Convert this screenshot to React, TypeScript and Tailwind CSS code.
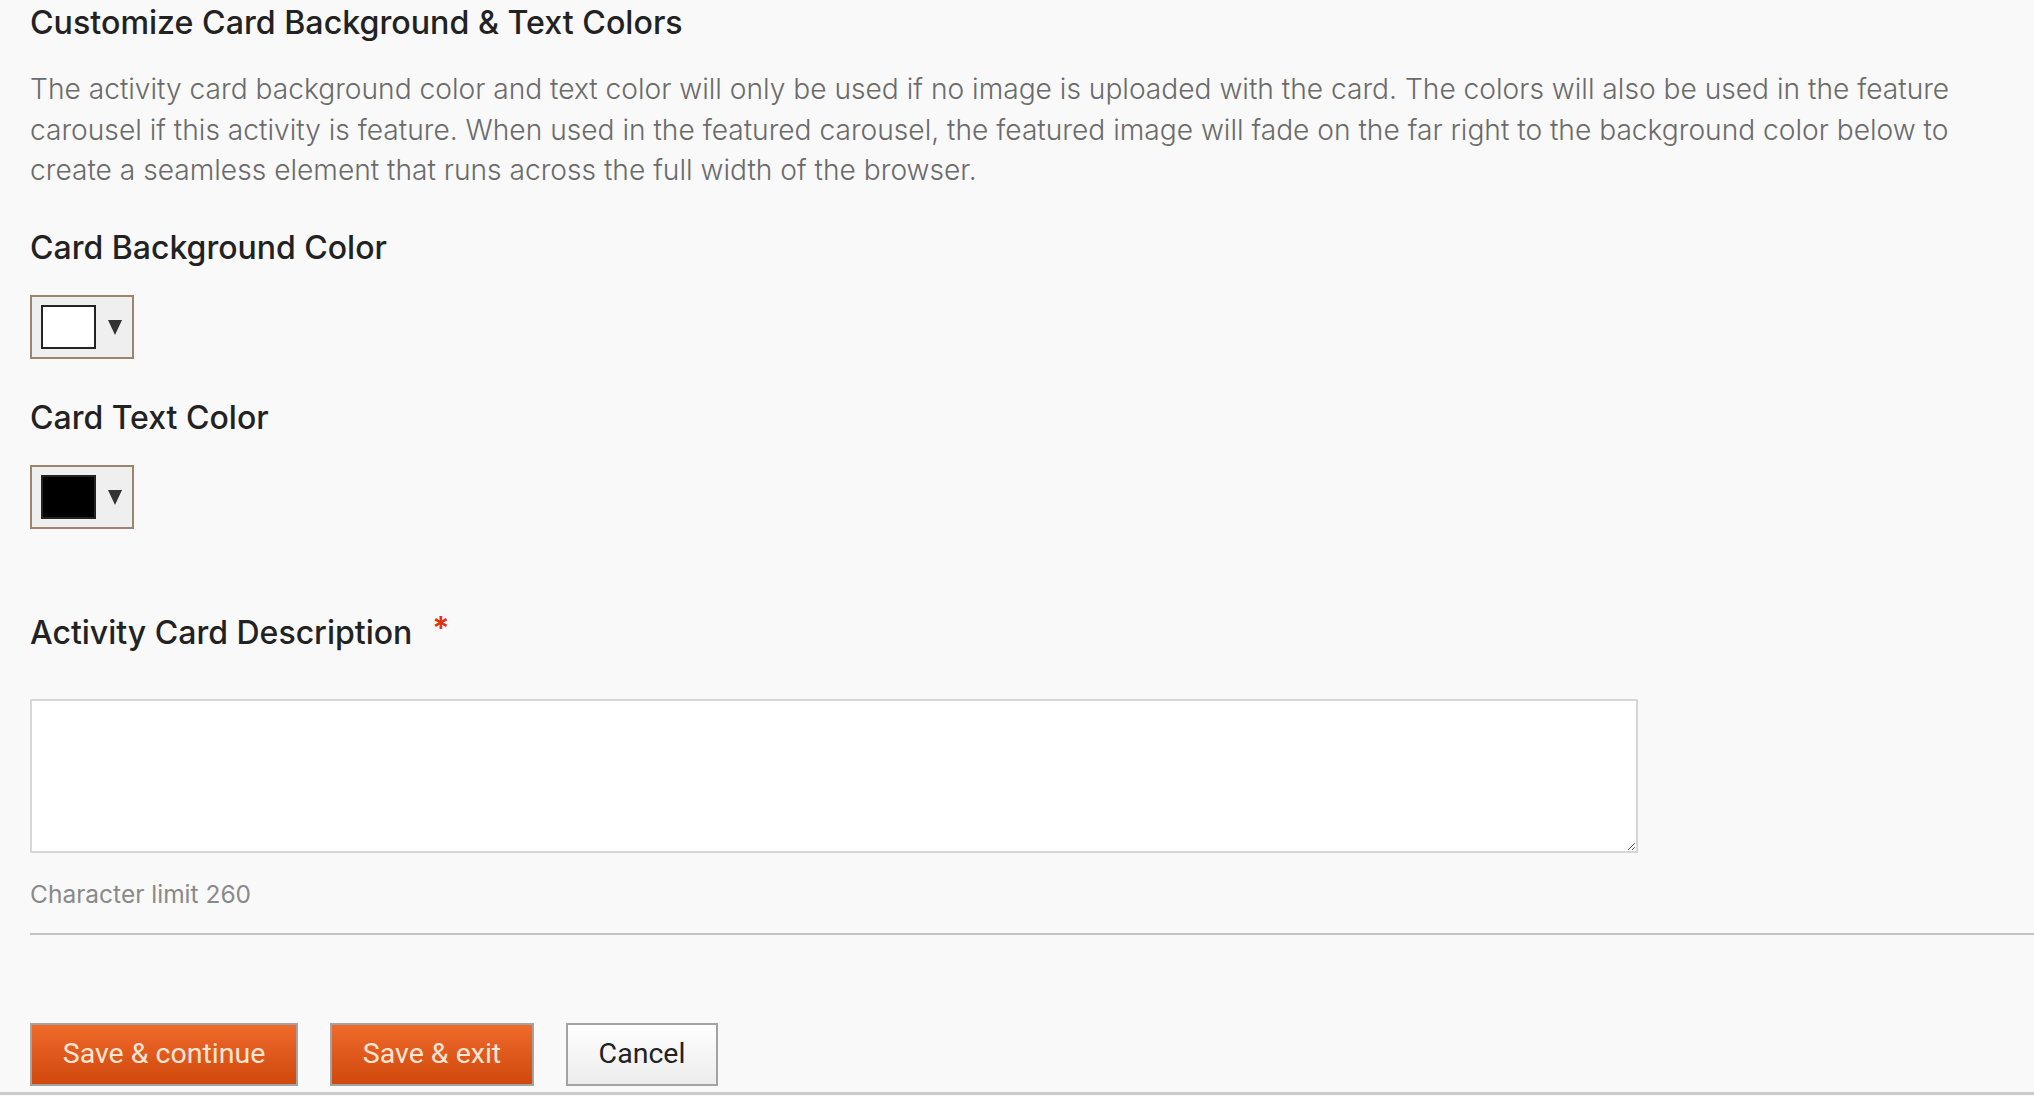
import { useState } from "react";

const font = { fontFamily: "Inter, 'Noto Sans', sans-serif" };

export default function App() {
  const [bg] = useState("#ffffff");
  const [fg] = useState("#000000");

  return (
    <div
      className="w-[2034px] h-[1096px] bg-[#f9f9f9] overflow-hidden flex flex-col font-['Inter',sans-serif]"
      style={font}>
      <main className="flex-1 pl-[30px]">
        <h2 className="mt-[4px] text-[32.2px] leading-[38px] font-medium text-[#222]">
          Customize Card Background &amp; Text Colors
        </h2>
        <p className="mt-[27px] w-[1990px] text-[28.15px] leading-[40.5px] font-light text-[#6b6b6b]">
          <span className="block whitespace-nowrap">
            The activity card background color and text color will only be used if no image is
            uploaded with the card. The colors will also be used in the feature
          </span>
          <span className="block whitespace-nowrap">
            carousel if this activity is feature. When used in the featured carousel, the featured
            image will fade on the far right to the background color below to
          </span>
          <span className="block whitespace-nowrap">
            create a seamless element that runs across the full width of the browser.
          </span>
        </p>

        <Label text="Card Background Color" className="mt-[37px]" />
        <ColorPicker color={bg} />

        <Label text="Card Text Color" className="mt-[39px]" />
        <ColorPicker color={fg} />

        <Label text="Activity Card Description" className="mt-[84px]" required />
        <textarea
          className="block mt-[46px] w-[1608px] h-[154px] bg-white border-2 border-[#d6d6d6] outline-none resize-y"
          aria-label="Activity Card Description"
        />
        <p className="mt-[26px] text-[24.5px] leading-[30px] text-[#8a8a8a]">Character limit 260</p>

        <hr className="mt-[24px] border-0 h-[2px] bg-[#c2c2c2]" />

        <div className="mt-[88px] flex gap-[32px] font-['Roboto',sans-serif]">
          <button className="w-[268px] h-[63px] border-2 border-[#a3a3a3] bg-gradient-to-b from-[#ee6a2a] to-[#d1480a] text-[#fde6d6] text-[28.5px]">
            Save &amp; continue
          </button>
          <button className="w-[204px] h-[63px] border-2 border-[#a3a3a3] bg-gradient-to-b from-[#ee6a2a] to-[#d1480a] text-[#fde6d6] text-[28.5px]">
            Save &amp; exit
          </button>
          <button className="w-[152px] h-[63px] border-2 border-[#a3a3a3] bg-gradient-to-b from-white to-[#ececec] text-[#222] text-[28.5px]">
            Cancel
          </button>
        </div>
      </main>
      <div className="h-[3px] mb-[1px] bg-[#cbcbcb]" />
    </div>
  );
}

//* —————————————————————————————————————————————————————————————————————————————————————

const Label = ({
  text,
  className,
  required,
}: {
  text: string;
  className?: string;
  required?: boolean;
}) => (
  <h3
    className={`flex items-start text-[32px] leading-[40px] font-medium text-[#222] ${className}`}>
    {text}
    {required && (
      <span className="ml-[20px] -mt-[4px] text-[32px] leading-[40px] font-semibold text-[#e5300c]">
        *
      </span>
    )}
  </h3>
);

const ColorPicker = ({ color }: { color: string }) => (
  <div className="mt-[27px] w-[104px] h-[64px] border-2 border-[#9b8570] bg-[#efefef] flex items-center pl-[9px] gap-[12px]">
    <span className="w-[55px] h-[44px] border-2 border-[#222]" style={{ backgroundColor: color }} />
    <svg width="14" height="15" viewBox="0 0 14 15" className="mt-[1px]">
      <path d="M0 0 H14 L7 15 Z" fill="#333" />
    </svg>
  </div>
);
